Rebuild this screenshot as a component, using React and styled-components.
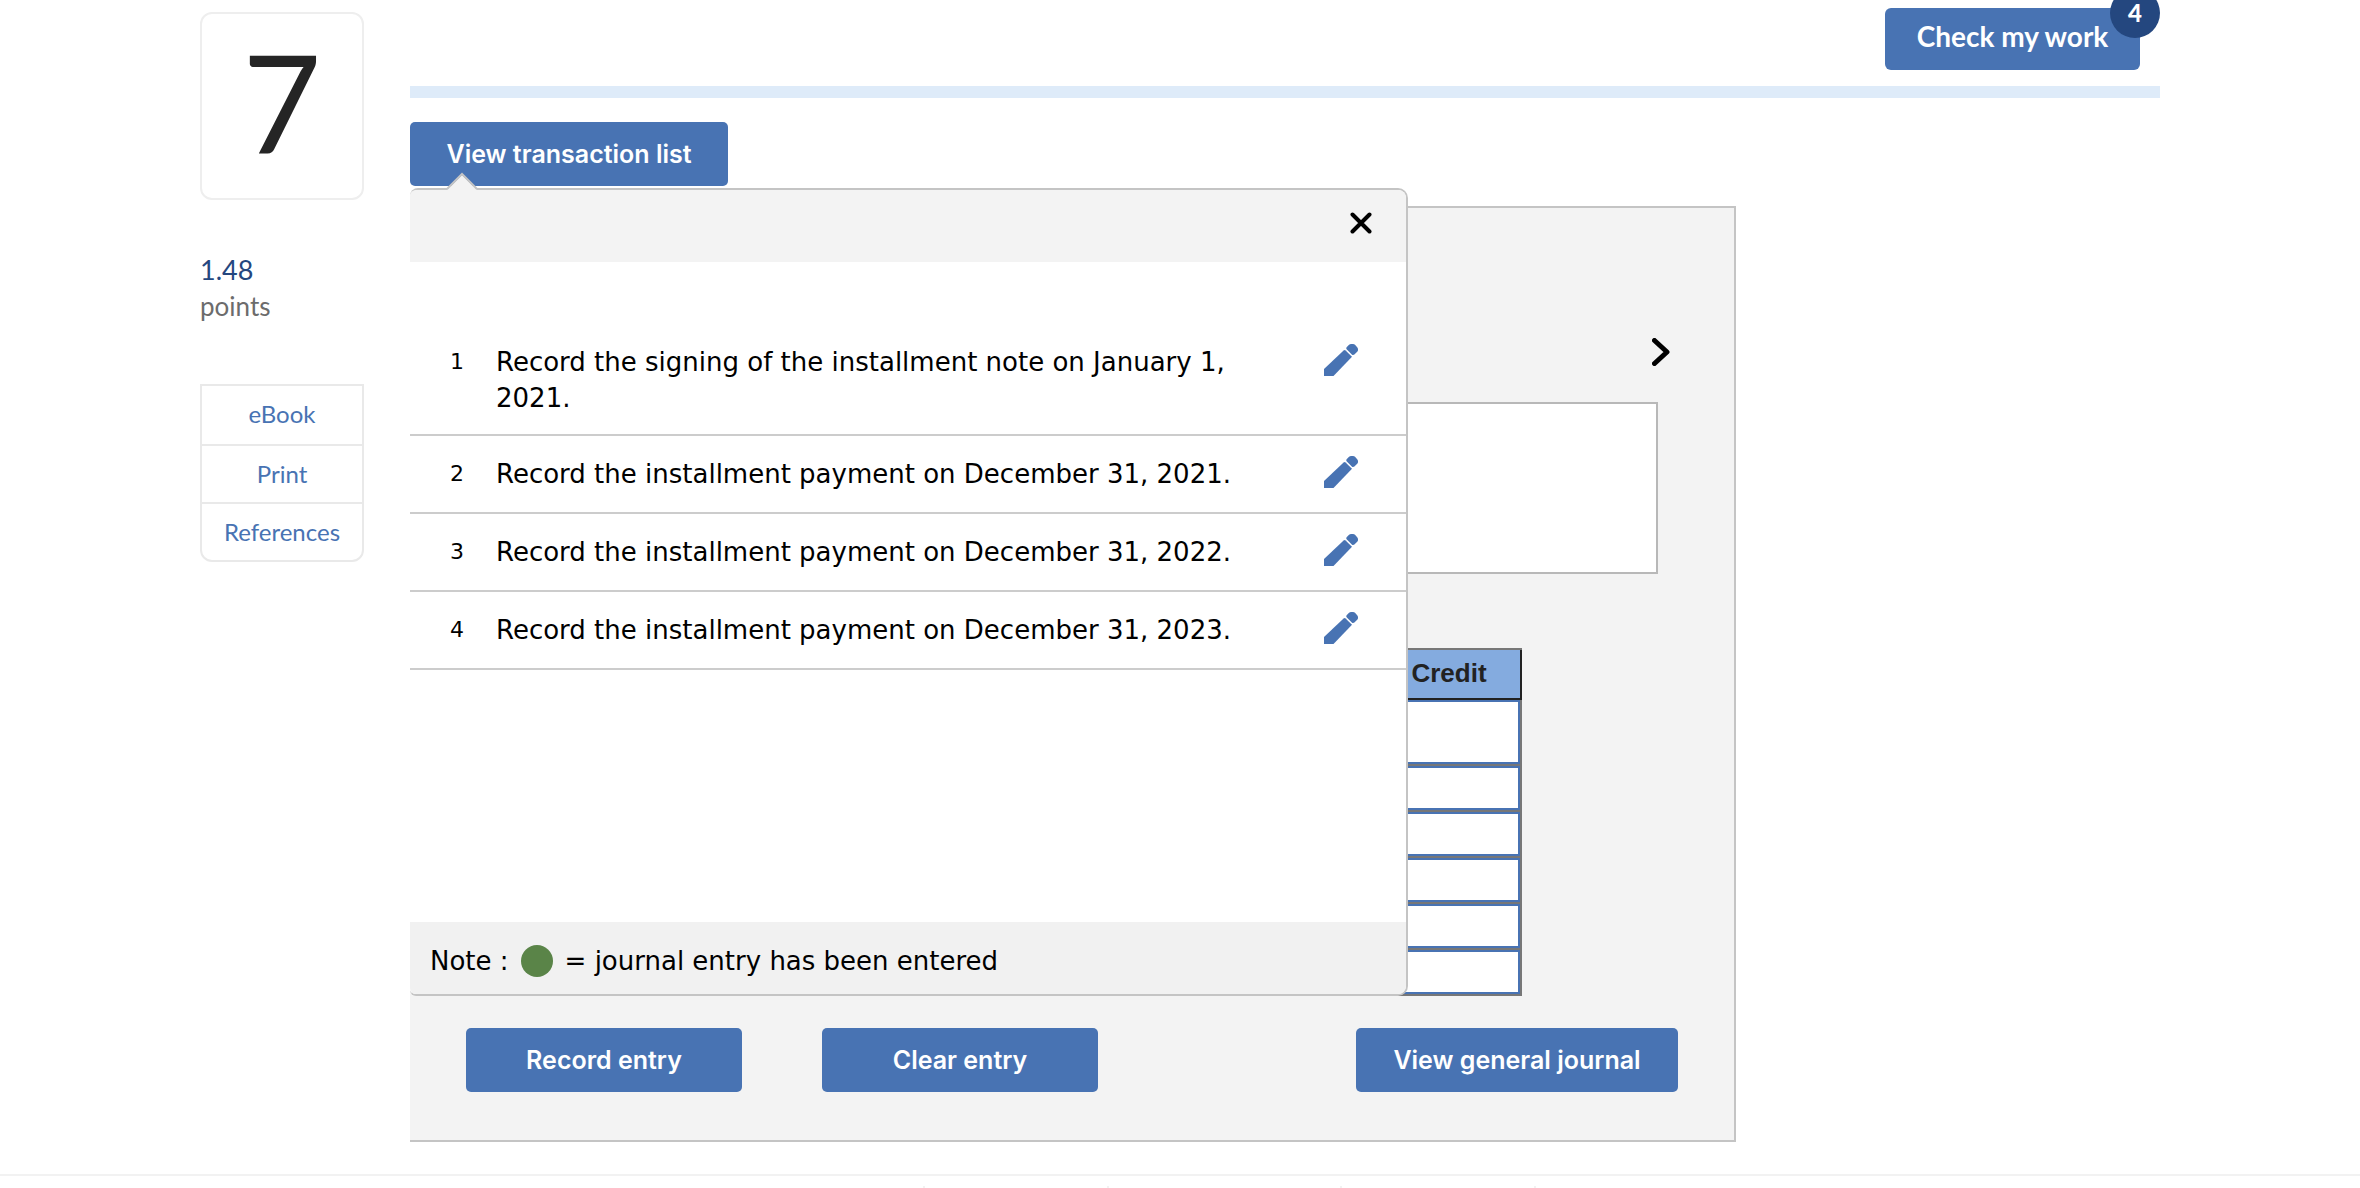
import React, { useState } from "react";
import styled, { createGlobalStyle } from "styled-components";

const transactions = [
  { id: 1, text: "Record the signing of the installment note on January 1, 2021." },
  { id: 2, text: "Record the installment payment on December 31, 2021." },
  { id: 3, text: "Record the installment payment on December 31, 2022." },
  { id: 4, text: "Record the installment payment on December 31, 2023." },
];

const creditRows = [1, 2, 3, 4, 5, 6];

export default function App() {
  const [listOpen, setListOpen] = useState(true);

  return (
    <>
      <GlobalStyle />
      <Page>
        <Layout>
          <Sidebar />
          <main>
            <TopBar>
              <CheckButton type="button">
                Check my work
                <Badge>4</Badge>
              </CheckButton>
            </TopBar>
            <Worksheet>
              <Button type="button" $width={318} onClick={() => setListOpen(!listOpen)}>
                View transaction list
              </Button>
              <JournalEntry />
              {listOpen && <TransactionList onClose={() => setListOpen(false)} />}
            </Worksheet>
          </main>
        </Layout>
        <PageFooter>
          <span />
          <span />
          <span />
          <span />
        </PageFooter>
      </Page>
    </>
  );
}

function Sidebar() {
  return (
    <SidebarContainer>
      <QuestionNumber>7</QuestionNumber>
      <Points>
        <strong>1.48</strong>
        points
      </Points>
      <Resources>
        <a href="#ebook">eBook</a>
        <a href="#print">Print</a>
        <a href="#references">References</a>
      </Resources>
    </SidebarContainer>
  );
}

function JournalEntry() {
  return (
    <Panel>
      <NextButton type="button" aria-label="Next">
        <svg width="18" height="28" viewBox="0 0 18 28">
          <path d="M2.5 2.5 L15 14 L2.5 25.5" />
        </svg>
      </NextButton>
      <Description />
      <CreditTable>
        <thead>
          <tr>
            <th scope="col">Credit</th>
          </tr>
        </thead>
        <tbody>
          {creditRows.map((row) => (
            <tr key={row}>
              <td>
                <input type="text" aria-label="Credit" />
              </td>
            </tr>
          ))}
        </tbody>
      </CreditTable>
      <Actions>
        <Button type="button" $width={276}>Record entry</Button>
        <Button type="button" $width={276}>Clear entry</Button>
        <Button type="button" $width={322}>View general journal</Button>
      </Actions>
    </Panel>
  );
}

function TransactionList({ onClose }) {
  return (
    <Popover>
      <Pointer width="32" height="20" viewBox="0 0 32 20">
        <path className="fill" d="M1 20 V18 L16 3 L31 18 V20 Z" />
        <path className="edge" d="M1 17 L16 2 L31 17" />
      </Pointer>
      <PopoverHeader>
        <CloseButton type="button" aria-label="Close" onClick={onClose}>
          <svg width="22" height="22" viewBox="0 0 22 22">
            <path d="M2.5 2.5 L19.5 19.5 M19.5 2.5 L2.5 19.5" />
          </svg>
        </CloseButton>
      </PopoverHeader>
      <Rows>
        {transactions.map(({ id, text }) => (
          <li key={id}>
            <span className="number">{id}</span>
            <span className="text">{text}</span>
            <EditButton type="button" aria-label="Edit">
              <svg width="34" height="32" viewBox="0 0 34 32">
                <path d="M0 32 V25 L19.6 6.4 Q20.6 5.6 21.6 6.4 L28 12.8 L9.5 32 Z" />
                <path d="M22.6 5.2 Q21.8 4.2 22.6 3.2 L24.8 0.9 Q25.8 0 27.2 0 H29 Q30.2 0 31 0.8 L33.2 3.2 Q34 4 34 5.2 V6 Q34 7 33.2 7.8 L30.4 10.6 Q29 11.6 27.8 10.5 Z" />
              </svg>
            </EditButton>
          </li>
        ))}
      </Rows>
      <Note>
        Note : <Dot /> = journal entry has been entered
      </Note>
    </Popover>
  );
}

const GlobalStyle = createGlobalStyle`
  * {
    box-sizing: border-box;
  }
  body {
    margin: 0;
    background: #fff;
    font-family: "DejaVu Sans", Verdana, sans-serif;
  }
  button {
    border: 0;
    padding: 0;
    background: none;
    cursor: pointer;
  }
`;

const Page = styled.div`
  display: flex;
  flex-direction: column;
  height: 100vh;
  overflow: hidden;
`;

const Layout = styled.div`
  display: grid;
  grid-template-columns: 164px minmax(0, 1fr);
  column-gap: 46px;
  padding: 0 200px;
`;

const SidebarContainer = styled.aside`
  display: flex;
  flex-direction: column;
  padding-top: 12px;
  font-family: Lato, sans-serif;
`;

const QuestionNumber = styled.div`
  height: 188px;
  border: 2px solid #eee;
  border-radius: 12px;
  color: #252525;
  font-size: 136px;
  line-height: 174px;
  text-align: center;
`;

const Points = styled.div`
  margin-top: 52px;
  color: #6c6c6c;
  font-size: 26px;
  line-height: 36px;
  strong {
    display: block;
    color: #24477f;
    font-size: 27px;
    font-weight: 400;
  }
`;

const Resources = styled.nav`
  display: flex;
  flex-direction: column;
  margin-top: 60px;
  border: 2px solid #e9e9e9;
  border-radius: 0 0 12px 12px;
  a {
    height: 58px;
    color: #4873b3;
    font-size: 24px;
    line-height: 56px;
    text-align: center;
    text-decoration: none;
  }
  a + a {
    border-top: 2px solid #e9e9e9;
  }
`;

const TopBar = styled.header`
  display: flex;
  justify-content: flex-end;
  height: 98px;
  padding: 8px 20px 0 0;
  border-bottom: 12px solid #deebf9;
`;

const CheckButton = styled.button`
  position: relative;
  width: 255px;
  height: 62px;
  padding-bottom: 6px;
  border-radius: 6px;
  background: #4873b3;
  color: #fff;
  font-family: Lato, sans-serif;
  font-size: 28px;
  font-weight: 700;
`;

const Badge = styled.span`
  position: absolute;
  top: -20px;
  right: -20px;
  display: flex;
  justify-content: center;
  align-items: center;
  width: 50px;
  height: 50px;
  border-radius: 50%;
  background: #24477f;
  font-size: 24px;
  font-weight: 900;
  line-height: 24px;
`;

const Worksheet = styled.section`
  position: relative;
  padding-top: 24px;
`;

const Button = styled.button`
  width: ${({ $width }) => $width}px;
  height: 64px;
  border-radius: 5px;
  background: #4873b3;
  color: #fff;
  font-family: Inter, sans-serif;
  font-size: 25px;
  font-weight: 600;
`;

const Panel = styled.div`
  display: flex;
  flex-direction: column;
  max-width: 1326px;
  margin-top: 20px;
  padding: 130px 56px 48px;
  border: 2px solid #c4c4c4;
  border-left: 0;
  background: #f3f3f3;
`;

const NextButton = styled.button`
  align-self: flex-end;
  height: 28px;
  margin-right: 8px;
  svg {
    display: block;
    fill: none;
    stroke: #000;
    stroke-width: 5;
    stroke-linecap: round;
    stroke-linejoin: round;
  }
`;

const Description = styled.div`
  height: 172px;
  margin: 36px 20px 0 0;
  border: 2px solid #b8b8b8;
  background: #fff;
`;

const CreditTable = styled.table`
  align-self: flex-end;
  width: 144px;
  margin: 74px 156px 0 0;
  border-spacing: 0;
  border-top: 2px solid #777;
  th {
    height: 50px;
    padding: 0 0 2px;
    border-right: 2px solid #222;
    border-bottom: 2px solid #222;
    background: #84abdf;
    color: #222;
    font-family: "Liberation Sans", Arial, sans-serif;
    font-size: 26px;
    font-weight: 700;
  }
  td {
    padding: 0;
    border-right: 2px solid #777;
    border-bottom: 2px solid #777;
  }
  input {
    display: block;
    width: 100%;
    height: 44px;
    border: 2px solid #4873b3;
    border-radius: 0;
    background: #fff;
  }
  tr:first-child input {
    height: 64px;
  }
`;

const Actions = styled.div`
  display: flex;
  gap: 80px;
  margin-top: 32px;
  button:last-child {
    margin-left: auto;
  }
`;

const Popover = styled.div`
  position: absolute;
  top: 90px;
  left: 0;
  display: flex;
  flex-direction: column;
  width: 998px;
  height: 808px;
  border: 2px solid #c4c4c4;
  border-left: 0;
  border-radius: 8px 10px 10px 6px;
  background: #fff;
`;

const Pointer = styled.svg`
  position: absolute;
  top: -18px;
  left: 36px;
  .fill {
    fill: #f3f3f3;
  }
  .edge {
    fill: none;
    stroke: #c4c4c4;
    stroke-width: 2;
  }
`;

const PopoverHeader = styled.div`
  display: flex;
  justify-content: flex-end;
  align-items: flex-start;
  height: 72px;
  padding: 22px 34px 0 0;
  border-radius: 6px 8px 0 0;
  background: #f3f3f3;
`;

const CloseButton = styled.button`
  height: 22px;
  svg {
    display: block;
    stroke: #000;
    stroke-width: 4;
    stroke-linecap: round;
  }
`;

const Rows = styled.ul`
  flex: 1;
  margin: 0;
  padding: 60px 0 0;
  list-style: none;
  color: #000;
  font-size: 26px;
  line-height: 36px;
  li {
    display: flex;
    align-items: flex-start;
    padding: 20px 48px 20px 36px;
    border-bottom: 2px solid #ccc;
  }
  li:first-child {
    padding-top: 22px;
    padding-bottom: 18px;
  }
  .number {
    width: 50px;
    padding-left: 4px;
    font-size: 22px;
  }
  .text {
    width: 780px;
  }
`;

const EditButton = styled.button`
  height: 32px;
  margin-left: auto;
  svg {
    display: block;
    fill: #4873b3;
  }
`;

const Note = styled.div`
  display: flex;
  align-items: center;
  gap: 12px;
  height: 72px;
  padding: 6px 20px 0;
  border-radius: 0 0 8px 6px;
  background: #f1f1f1;
  font-size: 26px;
`;

const Dot = styled.span`
  width: 32px;
  height: 32px;
  border-radius: 50%;
  background: #5a8448;
`;

const PageFooter = styled.footer`
  display: grid;
  grid-template-columns: 100px 184px 233px 194px;
  justify-content: center;
  margin-top: 32px;
  padding-top: 10px;
  border-top: 2px solid #f2f2f2;
  span {
    height: 24px;
    border-right: 2px solid #f2f2f2;
  }
`;
